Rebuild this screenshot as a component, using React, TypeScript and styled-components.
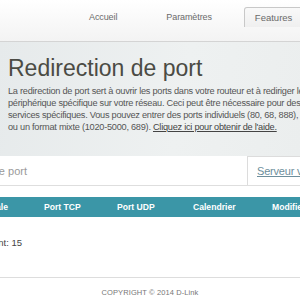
import styled, { createGlobalStyle } from 'styled-components';

const GlobalStyle = createGlobalStyle`
  html, body {
    margin: 0;
    padding: 0;
    overflow: hidden;
    background: #ffffff;
    font-family: 'Liberation Sans', Arial, sans-serif;
  }
`;

const Page = styled.div`
  width: 300px;
  height: 300px;
  overflow: hidden;
  display: flex;
  flex-direction: column;
`;

const TopBar = styled.div`
  height: 42px;
  flex-shrink: 0;
  background: linear-gradient(#ffffff, #f3f3f3);
  border-bottom: 1px solid #d4d4d4;
  box-shadow: 0 1px 2px rgba(0, 0, 0, 0.06);
  padding-top: 7px;
  box-sizing: border-box;
`;

const Nav = styled.nav`
  display: flex;
  align-items: center;
  height: 20px;
  padding-left: 89px;
  white-space: nowrap;
`;

const NavLink = styled.span`
  font-size: 9px;
  letter-spacing: -0.1px;
  color: #6a6a6a;
`;

const NavSep = styled.span<{ $before: number; $after: number }>`
  width: 1px;
  height: 14px;
  background: #9a9a9a;
  margin-left: ${(p) => p.$before}px;
  margin-right: ${(p) => p.$after}px;
`;

const Tab = styled.span`
  height: 20px;
  box-sizing: border-box;
  padding: 0 14px 0 10px;
  display: flex;
  align-items: center;
  font-size: 9.5px;
  color: #6a6a6a;
  background: linear-gradient(#f9f9f9, #efefef);
  border: 1px solid #c8c8c8;
  border-bottom: none;
  border-radius: 3px 0 0 0;
`;

const Intro = styled.section`
  height: 114px;
  flex-shrink: 0;
  background: linear-gradient(100deg, #e6eaeb, #eef1f1 60%, #ebeeee);
  padding: 13px 0 0 8px;
  box-sizing: border-box;
`;

const Title = styled.h1`
  margin: 0;
  font-size: 23px;
  line-height: 26px;
  font-weight: normal;
  color: #4b4b44;
`;

const Text = styled.p`
  margin: 4px 0 0;
  font-size: 9.2px;
  letter-spacing: -0.25px;
  line-height: 12px;
  color: #555555;
  white-space: nowrap;
`;

const Line = styled.span`
  display: block;
`;

const HelpLink = styled.a`
  color: #444444;
  text-decoration: underline;
`;

const SearchRow = styled.div`
  height: 30px;
  flex-shrink: 0;
  display: flex;
  border-bottom: 1px solid #dedede;
  box-sizing: border-box;
`;

const SearchField = styled.div`
  flex: 1;
  display: flex;
  align-items: center;
  font-size: 11px;
  color: #9a9a9a;
  white-space: nowrap;
`;

/* right edge of clipped text sits at a fixed x; the rest overflows off the left */
const ClipEnd = styled.div<{ $end: number }>`
  width: ${(p) => p.$end}px;
  flex-shrink: 0;
  display: flex;
  justify-content: flex-end;
  white-space: nowrap;
`;

const VirtualBox = styled.div`
  width: 53px;
  box-sizing: border-box;
  display: flex;
  align-items: center;
  padding-left: 9px;
  border-left: 1px solid #dcdcdc;
  border-top: 1px solid #dcdcdc;
  overflow: hidden;
  white-space: nowrap;
`;

const VirtualLink = styled.a`
  font-size: 11px;
  letter-spacing: -0.2px;
  color: #6d8e9c;
  text-decoration: underline;
`;

const TableHead = styled.div`
  margin-top: 11px;
  height: 20px;
  flex-shrink: 0;
  background: #3b96a7;
  display: flex;
  align-items: center;
  white-space: nowrap;
  font-size: 8.6px;
  font-weight: bold;
  color: #ffffff;
`;

const HeadCell = styled.span<{ $width: number }>`
  width: ${(p) => p.$width}px;
  flex-shrink: 0;
`;

const Count = styled.div`
  margin-top: 20px;
  display: flex;
  font-size: 9.5px;
  color: #444444;
`;

const Footer = styled.footer`
  margin-top: 29px;
  border-top: 1px solid #dddddd;
  padding-top: 10px;
  text-align: center;
  font-size: 7.5px;
  color: #777777;
  letter-spacing: 0.1px;
`;

export default function App() {
  return (
    <Page>
      <GlobalStyle />
      <TopBar>
        <Nav>
          <NavLink>Accueil</NavLink>
          <NavSep $before={29} $after={20} />
          <NavLink>Paramètres</NavLink>
          <NavSep $before={20} $after={12} />
          <Tab>Features</Tab>
        </Nav>
      </TopBar>
      <Intro>
        <Title>Redirection de port</Title>
        <Text>
          <Line>La redirection de port sert à ouvrir les ports dans votre routeur et à rediriger les données via</Line>
          <Line>périphérique spécifique sur votre réseau. Ceci peut être nécessaire pour des applications ou</Line>
          <Line>services spécifiques. Vous pouvez entrer des ports individuels (80, 68, 888), des plages (200-300)</Line>
          <Line>
            ou un format mixte (1020-5000, 689). <HelpLink>Cliquez ici pour obtenir de l'aide.</HelpLink>
          </Line>
        </Text>
      </Intro>
      <SearchRow>
        <SearchField>
          <ClipEnd $end={27}>Redirection de port</ClipEnd>
        </SearchField>
        <VirtualBox>
          <VirtualLink>Serveur virtuel</VirtualLink>
        </VirtualBox>
      </SearchRow>
      <TableHead>
        <ClipEnd $end={8}>IP locale</ClipEnd>
        <HeadCell $width={36} />
        <HeadCell $width={73}>Port TCP</HeadCell>
        <HeadCell $width={76}>Port UDP</HeadCell>
        <HeadCell $width={79}>Calendrier</HeadCell>
        <HeadCell $width={40}>Modifier</HeadCell>
      </TableHead>
      <Count>
        <ClipEnd $end={22}>Restant: 15</ClipEnd>
      </Count>
      <Footer>COPYRIGHT © 2014 D-Link</Footer>
    </Page>
  );
}
